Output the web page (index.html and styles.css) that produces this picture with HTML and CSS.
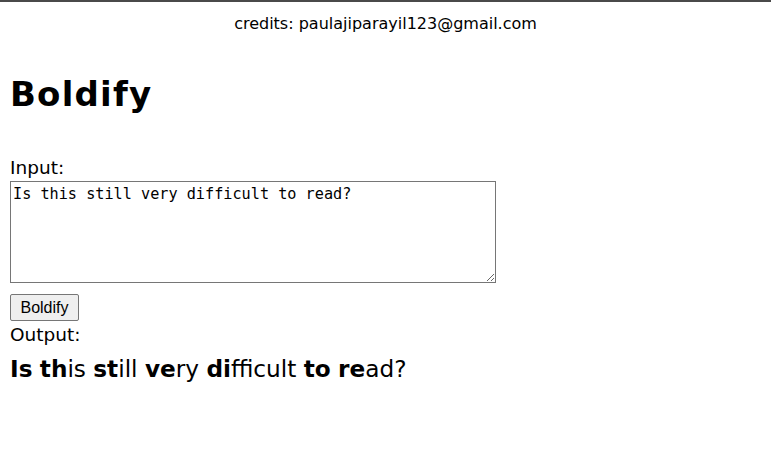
FILE: index.html
```html
<!DOCTYPE html>
<html lang="en">
<head>
<meta charset="utf-8">
<title>Boldify</title>
<link rel="stylesheet" href="styles.css">
</head>
<body>
<div class="topbar"></div>
<p class="credits">credits: paulajiparayil123@gmail.com</p>
<main class="app">
  <h1 class="title">Boldify</h1>
  <label class="label" for="input">Input:</label>
  <textarea id="input" class="input">Is this still very difficult to read?</textarea>
  <button class="btn" type="button">Boldify</button>
  <div class="label out-label">Output:</div>
  <p class="output"><b>Is</b> <b>th</b>is <b>st</b>ill <b>ve</b>ry <b>di</b>fficult <b>to</b> <b>re</b>ad?</p>
</main>
</body>
</html>
```

FILE: styles.css
```css
html, body {
  margin: 0;
  padding: 0;
  background: #fff;
}
body {
  font-family: "DejaVu Sans", "Open Sans", sans-serif;
  color: #000;
}
.topbar {
  height: 2px;
  background: #4a4a4a;
}
.credits {
  margin: 10px 0 0;
  font-size: 16px;
  line-height: 24px;
  text-align: center;
}
.app {
  display: flex;
  flex-direction: column;
  align-items: flex-start;
  padding: 0 10px;
}
.title {
  margin: 38px 0 0;
  font-size: 34px;
  line-height: 40px;
  letter-spacing: 1.2px;
  font-weight: bold;
}
.label {
  display: block;
  margin-top: 42px;
  font-size: 18.5px;
  line-height: 24px;
}
.input {
  box-sizing: border-box;
  margin: 1px 0 0;
  width: 486px;
  height: 102px;
  padding: 3px 2px 2px;
  border: 1px solid #767676;
  border-radius: 0;
  font-family: "DejaVu Sans Mono", "Liberation Mono", monospace;
  font-size: 15.2px;
  color: #000;
  resize: both;
}
.btn {
  box-sizing: border-box;
  margin: 11px 0 0;
  width: 69px;
  height: 27px;
  padding: 0 9px;
  border: 1px solid #767676;
  border-radius: 2px;
  background: #efefef;
  font-family: "Liberation Sans", Arial, sans-serif;
  font-size: 16px;
  line-height: 25px;
  color: #000;
}
.out-label {
  margin-top: 2px;
}
.output {
  margin: 7px 0 0;
  font-size: 23.2px;
  line-height: 30px;
}
.output b {
  font-weight: bold;
}
```
